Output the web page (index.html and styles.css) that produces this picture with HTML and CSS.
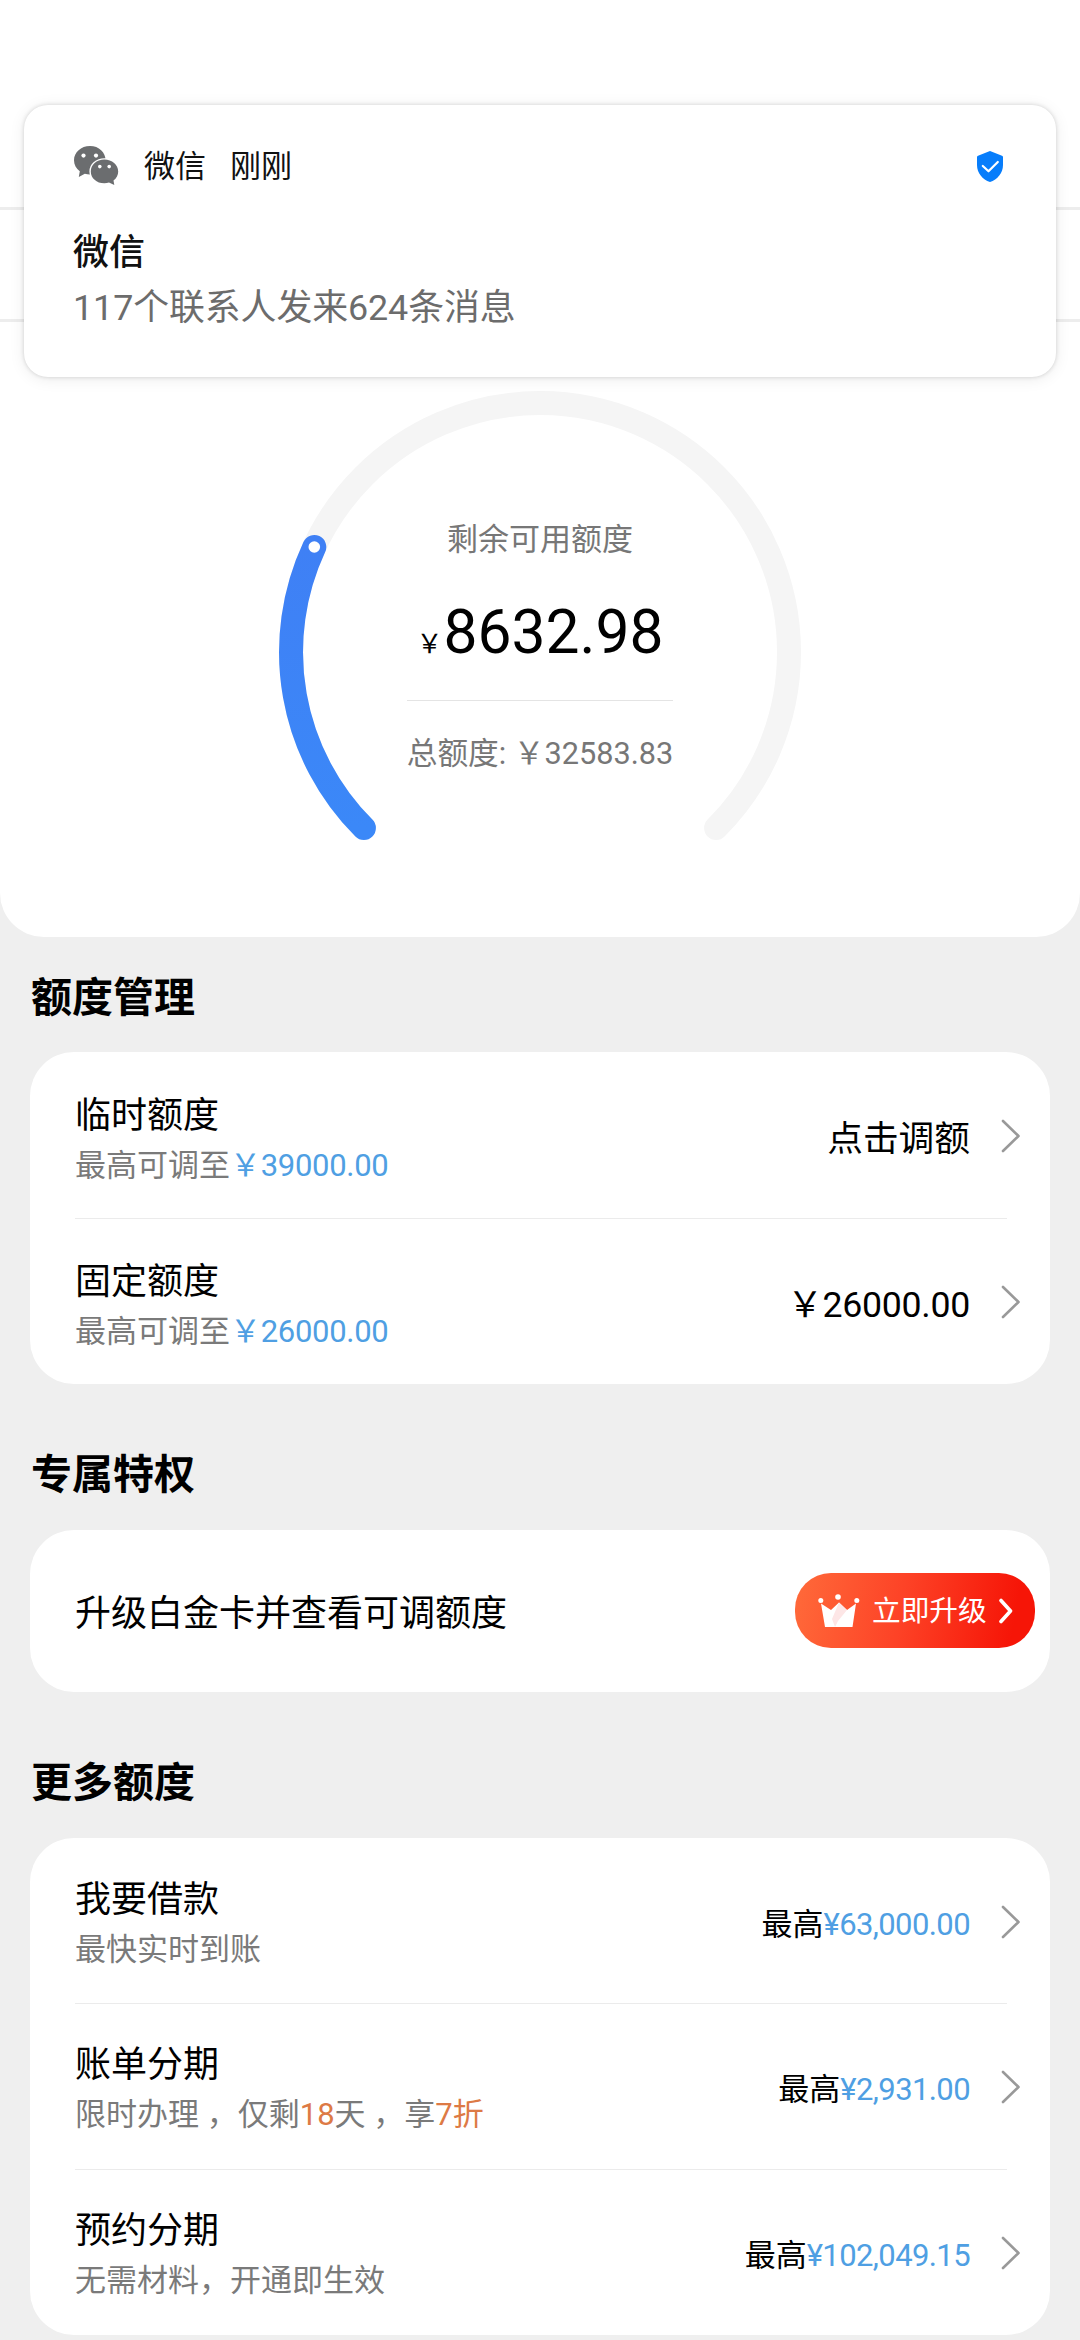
FILE: index.html
```html
<!DOCTYPE html>
<html lang="zh-CN">
<head>
<meta charset="utf-8">
<title>额度管理</title>
<link rel="stylesheet" href="styles.css">
</head>
<body>
<div class="screen">
  <header class="hero">
    <div class="navbar"></div>
    <div class="tabbar"></div>
    <div class="gauge">
      <svg class="gauge-ring" viewBox="0 0 522 522" aria-hidden="true">
        <defs>
          <linearGradient id="ring" x1="0" y1="0" x2="0" y2="1">
            <stop offset="0" stop-color="#3f80f5"/>
            <stop offset="1" stop-color="#3b88f8"/>
          </linearGradient>
        </defs>
        <path class="ring-track" d="M84.9 437.1A249 249 0 1 1 437.1 437.1"/>
        <path class="ring-value" d="M84.9 437.1A249 249 0 0 1 35.3 156"/>
        <circle cx="35.3" cy="156" r="5.8" fill="#fff"/>
      </svg>
      <div class="gauge-info">
        <div class="gauge-label">剩余可用额度</div>
        <div class="gauge-amount"><span class="yen">￥</span>8632.98</div>
        <div class="gauge-total">总额度: ￥32583.83</div>
      </div>
    </div>
  </header>

  <main class="content">
    <h2 class="heading">额度管理</h2>
    <section class="card">
      <div class="row">
        <div class="row-text">
          <div class="row-title">临时额度</div>
          <div class="row-sub">最高可调至<span class="blue">￥39000.00</span></div>
        </div>
        <div class="row-value large">点击调额</div>
        <svg class="chevron" viewBox="0 0 20 34"><path d="M2 2L17.500 17L2 32"/></svg>
      </div>
      <div class="row">
        <div class="row-text">
          <div class="row-title">固定额度</div>
          <div class="row-sub">最高可调至<span class="blue">￥26000.00</span></div>
        </div>
        <div class="row-value large"><span class="figure">￥26000.00</span></div>
        <svg class="chevron" viewBox="0 0 20 34"><path d="M2 2L17.500 17L2 32"/></svg>
      </div>
    </section>

    <h2 class="heading next">专属特权</h2>
    <section class="card upgrade">
      <div class="upgrade-text">升级白金卡并查看可调额度</div>
      <div class="upgrade-btn">
        <svg class="crown" viewBox="0 0 42 34" aria-hidden="true">
          <path fill="#fff" d="M3 9.500L13 16L21 8.500L29 16L38 9.500L34.500 33H7Z"/>
          <path fill="#fde6e6" d="M21 8.500L29 16L20 27L17 33L14 25Z"/>
          <circle cx="2.800" cy="6.500" r="2.500" fill="#fff"/>
          <circle cx="20" cy="3" r="2.800" fill="#fff"/>
          <circle cx="38.800" cy="6.500" r="2.500" fill="#fff"/>
        </svg>
        <span class="btn-label">立即升级</span>
        <svg class="btn-arrow" viewBox="0 0 14 26"><path d="M2 2.500L11.500 13L2 23.500"/></svg>
      </div>
    </section>

    <h2 class="heading next">更多额度</h2>
    <section class="card more">
      <div class="row">
        <div class="row-text">
          <div class="row-title">我要借款</div>
          <div class="row-sub">最快实时到账</div>
        </div>
        <div class="row-value">最高<span class="blue">¥63,000.00</span></div>
        <svg class="chevron" viewBox="0 0 20 34"><path d="M2 2L17.500 17L2 32"/></svg>
      </div>
      <div class="row">
        <div class="row-text">
          <div class="row-title">账单分期</div>
          <div class="row-sub">限时办理 ，仅剩<span class="orange">18</span>天 ，享<span class="orange">7折</span></div>
        </div>
        <div class="row-value">最高<span class="blue">¥2,931.00</span></div>
        <svg class="chevron" viewBox="0 0 20 34"><path d="M2 2L17.500 17L2 32"/></svg>
      </div>
      <div class="row">
        <div class="row-text">
          <div class="row-title">预约分期</div>
          <div class="row-sub">无需材料，开通即生效</div>
        </div>
        <div class="row-value">最高<span class="blue">¥102,049.15</span></div>
        <svg class="chevron" viewBox="0 0 20 34"><path d="M2 2L17.500 17L2 32"/></svg>
      </div>
    </section>
  </main>

  <aside class="notice">
    <div class="notice-head">
      <svg class="wechat" viewBox="0 0 45 39" aria-hidden="true">
        <path fill="#6b6d6f" d="M16 0C7 0 0 6.300 0 14.200C0 18.600 2.200 22.500 5.800 25.200L4.800 31L10.800 27.700C12.400 28.200 14.200 28.400 16 28.400C25 28.400 31.500 22 31.500 14.200S25 0 16 0Z"/>
        <ellipse cx="30.300" cy="25.400" rx="14.900" ry="13.200" fill="#fff"/>
        <path fill="#6b6d6f" d="M30.300 13.500C22.600 13.500 16.800 18.900 16.800 25.500S22.600 37.300 30.300 37.300C32 37.300 33.600 37 35 36.500L40.300 39L39.500 34.500C42.500 32.300 44.200 29.100 44.200 25.500C44.200 18.900 38 13.500 30.300 13.500Z"/>
        <circle cx="9.500" cy="9.600" r="2.100" fill="#fff"/>
        <circle cx="22" cy="9.600" r="2.100" fill="#fff"/>
        <circle cx="25.800" cy="20.600" r="1.800" fill="#fff"/>
        <circle cx="35.200" cy="20.600" r="1.800" fill="#fff"/>
      </svg>
      <span class="notice-app">微信</span>
      <span class="notice-time">刚刚</span>
      <svg class="shield" viewBox="0 0 26 31" aria-hidden="true">
        <path fill="#077dfb" d="M13 0L25 4.800Q26 5.200 26 6.200V14C26 22 20.500 28.500 13 31C5.500 28.500 0 22 0 14V6.200Q0 5.200 1 4.800Z"/>
        <path d="M5.800 15L11.500 20.300L20.800 11" fill="none" stroke="#fff" stroke-width="2.200" stroke-linecap="round" stroke-linejoin="round"/>
      </svg>
    </div>
    <div class="notice-title">微信</div>
    <div class="notice-msg">117个联系人发来624条消息</div>
  </aside>
</div>
</body>
</html>
```
FILE: styles.css
```css
* { box-sizing: border-box; }
body {
  margin: 0;
  background: #efefef;
  color: #000;
  font-family: Roboto, "Noto Sans CJK SC", sans-serif;
}
svg { display: block; flex: none; }

.screen {
  position: relative;
  width: 1080px;
  height: 2340px;
  overflow: hidden;
  background: #efefef;
}

/* White top area with the quota gauge */
.hero {
  height: 937px;
  background: #fff;
  border-radius: 0 0 44px 44px;
}
.navbar { height: 210px; border-bottom: 3px solid #ededed; }
.tabbar { height: 112px; border-bottom: 3px solid #ededed; }
.gauge {
  display: grid;
  width: 522px;
  margin: 69px auto 0;
}
.gauge-ring, .gauge-info { grid-area: 1 / 1; }
.gauge-ring { width: 522px; height: 522px; }
.ring-track, .ring-value {
  fill: none;
  stroke-width: 24px;
  stroke-linecap: round;
}
.ring-track { stroke: #f5f5f5; }
.ring-value { stroke: url(#ring); }
.gauge-info {
  display: flex;
  flex-direction: column;
  align-items: center;
  padding-top: 128px;
  color: #777;
  white-space: nowrap;
}
.gauge-label { font-size: 31px; line-height: 42px; }
.gauge-amount {
  margin-top: 36px;
  font-size: 60.500px;
  line-height: 72px;
  color: #000;
}
.yen { margin-right: 1px; font-size: 26px; line-height: 1; }
.gauge-total {
  margin-top: 31px;
  padding-top: 32px;
  border-top: 1px solid #e4e4e4;
  font-size: 30.700px;
  line-height: 42px;
}

/* Sections */
.content { padding: 36px 30px 0; }
.heading {
  margin: 0;
  padding-left: 1px;
  font-size: 41px;
  line-height: 50px;
  font-weight: 700;
}
.card {
  margin-top: 29px;
  padding-left: 45px;
  border-radius: 44px;
  background: #fff;
}
.heading.next { margin-top: 66px; }
.heading.next + .card { margin-top: 30px; }
.row {
  display: flex;
  height: 166px;
  padding-right: 29px;
  background: linear-gradient(#ebebeb, #ebebeb) 0 0 / 932px 1px no-repeat;
}
.row:first-child { background: none; }
.more .row:first-child { height: 165px; }
.row-text { flex: 1; padding-top: 42px; }
.more .row-text { padding-top: 40px; }
.row-title { font-size: 36px; line-height: 44px; }
.row-sub {
  margin-top: 6px;
  font-size: 31px;
  line-height: 44px;
  color: #7a7a7a;
}
.row-sub .blue { letter-spacing: -.3px; }
.row-value {
  margin-right: 31px;
  font-size: 31px;
  line-height: 173px;
}
.row-value.large { font-size: 35.700px; line-height: 175px; }
.row-value .blue { letter-spacing: -.6px; }
.figure { letter-spacing: -.3px; }
.blue { color: #4f9fe3; }
.orange { color: #dd7a45; }
.chevron { width: 20px; height: 34px; margin-top: 67px; }
.chevron path {
  fill: none;
  stroke: #999;
  stroke-width: 2.600px;
  stroke-linecap: round;
  stroke-linejoin: round;
}

.upgrade {
  display: flex;
  align-items: center;
  justify-content: space-between;
  height: 162px;
  padding-right: 15px;
}
.upgrade-text { padding-top: 5px; font-size: 36px; line-height: 44px; }
.upgrade-btn {
  display: flex;
  align-items: center;
  width: 240px;
  height: 75px;
  margin-bottom: 1px;
  padding-left: 23px;
  border-radius: 36px;
  background: linear-gradient(100deg, #ff6a3a, #fd4226 45%, #f61507 90%);
  color: #fff;
}
.crown { width: 42px; height: 34px; }
.btn-label { margin-left: 12px; font-size: 28.700px; line-height: 40px; }
.btn-arrow { width: 14px; height: 26px; margin-left: 12px; }
.btn-arrow path {
  fill: none;
  stroke: #fff;
  stroke-width: 3.600px;
  stroke-linecap: round;
  stroke-linejoin: round;
}

/* Heads-up notification laid over the page */
.notice {
  position: absolute;
  top: 105px;
  left: 24px;
  width: 1032px;
  height: 272px;
  padding: 40px 49px 0;
  border-radius: 24px;
  background: #fff;
  box-shadow: 0 0 4px rgba(0, 0, 0, .16), 0 2px 16px rgba(0, 0, 0, .08);
}
.notice-head {
  display: flex;
  align-items: center;
  height: 42px;
  margin-left: 1px;
  font-size: 31px;
  line-height: 42px;
  color: #111;
}
.wechat { width: 45px; height: 39px; margin-top: -1px; }
.notice-app { margin-left: 25px; padding-top: 2px; }
.notice-time { margin-left: 24px; padding-top: 2px; }
.shield { width: 26px; height: 31px; margin-left: auto; margin-right: 4px; }
.notice-title {
  margin-top: 44px;
  font-size: 36px;
  line-height: 44px;
  font-weight: 500;
  color: #111;
}
.notice-msg {
  margin-top: 11px;
  font-size: 35.900px;
  line-height: 44px;
  letter-spacing: -.1px;
  color: #6c6c6c;
}
```
